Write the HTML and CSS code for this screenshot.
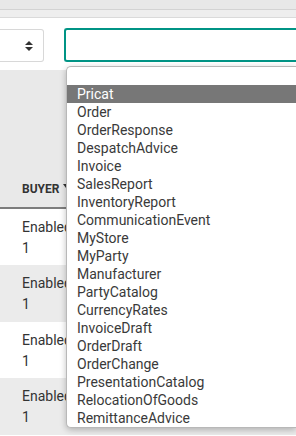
FILE: index.html
```html
<!DOCTYPE html>
<html lang="en">
<head>
  <meta charset="UTF-8" />
  <meta name="viewport" content="width=device-width, initial-scale=1.0"/>
  <title>Messages</title>
  <link rel="stylesheet" href="styles.css">
</head>
<body>
  <div class="topbar"></div>
  <div class="subbar"></div>

  <div class="filters">
    <div class="select">
      <svg class="updown" width="8" height="10" viewBox="0 0 8 10">
        <path d="M4 0 L8 4 L0 4 Z M0 6 L8 6 L4 10 Z" fill="#333"/>
      </svg>
    </div>
    <div class="search"></div>
  </div>

  <div class="grid">
    <div class="head">
      <span class="col-title">Buyer</span>
      <svg class="funnel" width="8" height="9" viewBox="0 0 8 9">
        <path d="M0 0 H8 L5 4 V9 L3 7.5 V4 Z" fill="#333"/>
      </svg>
    </div>
    <div class="row"><div>Enabled</div><div>1</div></div>
    <div class="row odd"><div>Enabled</div><div>1</div></div>
    <div class="row"><div>Enabled</div><div>1</div></div>
    <div class="row odd"><div>Enabled</div><div>1</div></div>
  </div>

  <ul class="listbox">
    <li class="blank"></li>
    <li class="active">Pricat</li>
    <li>Order</li>
    <li>OrderResponse</li>
    <li>DespatchAdvice</li>
    <li>Invoice</li>
    <li>SalesReport</li>
    <li>InventoryReport</li>
    <li>CommunicationEvent</li>
    <li>MyStore</li>
    <li>MyParty</li>
    <li>Manufacturer</li>
    <li>PartyCatalog</li>
    <li>CurrencyRates</li>
    <li>InvoiceDraft</li>
    <li>OrderDraft</li>
    <li>OrderChange</li>
    <li>PresentationCatalog</li>
    <li>RelocationOfGoods</li>
    <li>RemittanceAdvice</li>
  </ul>
</body>
</html>
```

FILE: styles.css
```css
body {
  margin: 0;
  font-family: Roboto, 'Liberation Sans', sans-serif;
  color: #333;
  background: #fff;
  position: relative;
  overflow: hidden;
  height: 436px;
}
.topbar {
  height: 9px;
  background: #e8e8e8;
  border-bottom: 1px solid #d3d3d3;
}
.subbar {
  height: 7px;
  background: #eeeeee;
  border-bottom: 1px solid #dadada;
}
.filters {
  display: flex;
  gap: 20px;
  padding-top: 10px;
  height: 34px;
}
.select {
  width: 44px;
  border: 1px solid #d8d8d8;
  border-left: none;
  border-radius: 0 3px 3px 0;
  display: flex;
  align-items: center;
  justify-content: flex-end;
  padding-right: 10px;
  box-sizing: border-box;
  height: 33px;
  margin-top: 1px;
}
.search {
  flex: 1;
  border: 2px solid #009485;
  border-right: none;
  border-radius: 3px 0 0 3px;
  box-sizing: border-box;
}
.grid {
  margin-top: 8px;
}
.head {
  height: 126px;
  background: #e9e9e9;
  border-bottom: 2px solid #7d7d7d;
  display: flex;
  align-items: flex-end;
  gap: 4px;
  padding: 0 0 11px 22px;
}
.col-title {
  font-size: 12px;
  font-weight: 700;
  text-transform: uppercase;
  color: #333;
  line-height: 14px;
}
.funnel {
  margin-bottom: 3px;
}
.row {
  height: 56px;
  padding: 8px 0 0 22px;
  box-sizing: border-box;
  font-size: 14px;
  line-height: 21px;
  background: #fff;
}
.row.odd {
  height: 57px;
  background: #ebebeb;
}
.listbox {
  position: absolute;
  left: 66px;
  right: 0;
  top: 66px;
  margin: 0;
  padding: 0;
  list-style: none;
  background: #fff;
  border: 1px solid #b8b8b8;
  border-right: none;
  border-radius: 5px 0 0 5px;
  box-shadow: 0 2px 6px rgba(0, 0, 0, 0.25);
  font-size: 14px;
  color: #3a3a3a;
}
.listbox li {
  height: 18px;
  line-height: 18px;
  padding-left: 10px;
}
.listbox li.active {
  background: #777;
  color: #fff;
}
```
